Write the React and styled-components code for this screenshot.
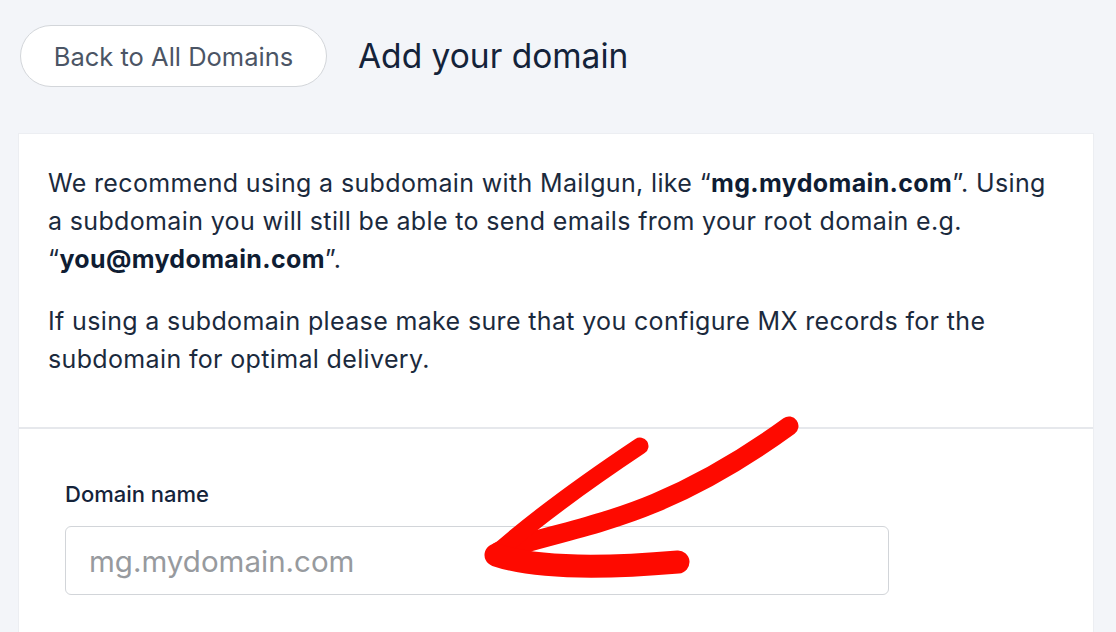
import React from 'react';
import styled, { createGlobalStyle } from 'styled-components';

const GlobalStyle = createGlobalStyle`
  html, body {
    margin: 0;
    padding: 0;
    background: #f3f5f9;
    font-family: Inter, "Noto Sans", sans-serif;
    color: #1b2a3d;
  }
  #root {
    min-height: 632px;
  }
`;

const Page = styled.div`
  position: relative;
  height: 632px;
  overflow: hidden;
  padding: 25px 22px 0 18px;
  box-sizing: border-box;
`;

const TopBar = styled.div`
  display: flex;
  align-items: center;
  gap: 31px;
  padding-left: 2px;
  height: 62px;
`;

const BackButton = styled.button`
  height: 62px;
  width: 307px;
  padding: 0;
  border-radius: 31px;
  border: 1.5px solid #d3d6da;
  background: #fff;
  color: #4b5565;
  font-family: inherit;
  font-size: 25.5px;
  cursor: pointer;
`;

const Title = styled.h1`
  margin: 0;
  font-size: 33.5px;
  font-weight: 400;
  color: #14233a;
`;

const Card = styled.div`
  margin-top: 46px;
  background: #fff;
  border: 1px solid #eceef2;
  border-bottom: none;
  height: 520px;
`;

const Section = styled.div`
  padding: ${p => p.$pad};
  border-top: ${p => (p.$divided ? '2px solid #e6e8ec' : 'none')};
`;

const Text = styled.p`
  margin: 0 0 24px;
  font-size: 25px;
  line-height: 38px;
  letter-spacing: 0.35px;
  color: #1b2a3d;
  &:last-child {
    margin-bottom: 0;
  }
  b {
    font-weight: 700;
    color: #0f1d33;
  }
`;

const Label = styled.label`
  display: block;
  font-size: 22px;
  font-weight: 500;
  color: #14233a;
  margin-bottom: 19px;
`;

const Input = styled.input`
  display: block;
  width: 824px;
  height: 69px;
  box-sizing: border-box;
  border: 1.5px solid #d2d5d9;
  border-radius: 6px;
  padding: 0 23px;
  font-family: inherit;
  font-size: 29.5px;
  color: #1b2a3d;
  &::placeholder {
    color: #979a9e;
  }
`;

const Overlay = styled.svg`
  position: absolute;
  left: 0;
  top: 0;
  pointer-events: none;
`;

const Arrow = () => (
  <Overlay width="1116" height="632" viewBox="0 0 1116 632">
    <g fill="none" stroke="#fe0a00" strokeLinecap="round" strokeLinejoin="round">
      <path d="M789 426 C 745 458, 705 482, 655 503 C 600 526, 545 536, 499 551" strokeWidth="19" />
      <path d="M640 446 C 592 478, 540 515, 499 551" strokeWidth="17" />
      <path d="M496 555 C 540 570, 620 567, 678 562" strokeWidth="23" />
    </g>
  </Overlay>
);

export default function App() {
  return (
    <>
      <GlobalStyle />
      <Page>
        <TopBar>
          <BackButton>Back to All Domains</BackButton>
          <Title>Add your domain</Title>
        </TopBar>
        <Card>
          <Section $pad="30px 30px 49px 29px">
            <Text>
              We recommend using a subdomain with Mailgun, like “<b>mg.mydomain.com</b>”. Using a
              subdomain you will still be able to send emails from your root domain e.g.
              “<b>you@mydomain.com</b>”.
            </Text>
            <Text>
              If using a subdomain please make sure that you configure MX records for the subdomain
              for optimal delivery.
            </Text>
          </Section>
          <Section $divided $pad="52px 30px 0 46px">
            <Label htmlFor="domain">Domain name</Label>
            <Input id="domain" placeholder="mg.mydomain.com" />
          </Section>
        </Card>
        <Arrow />
      </Page>
    </>
  );
}
